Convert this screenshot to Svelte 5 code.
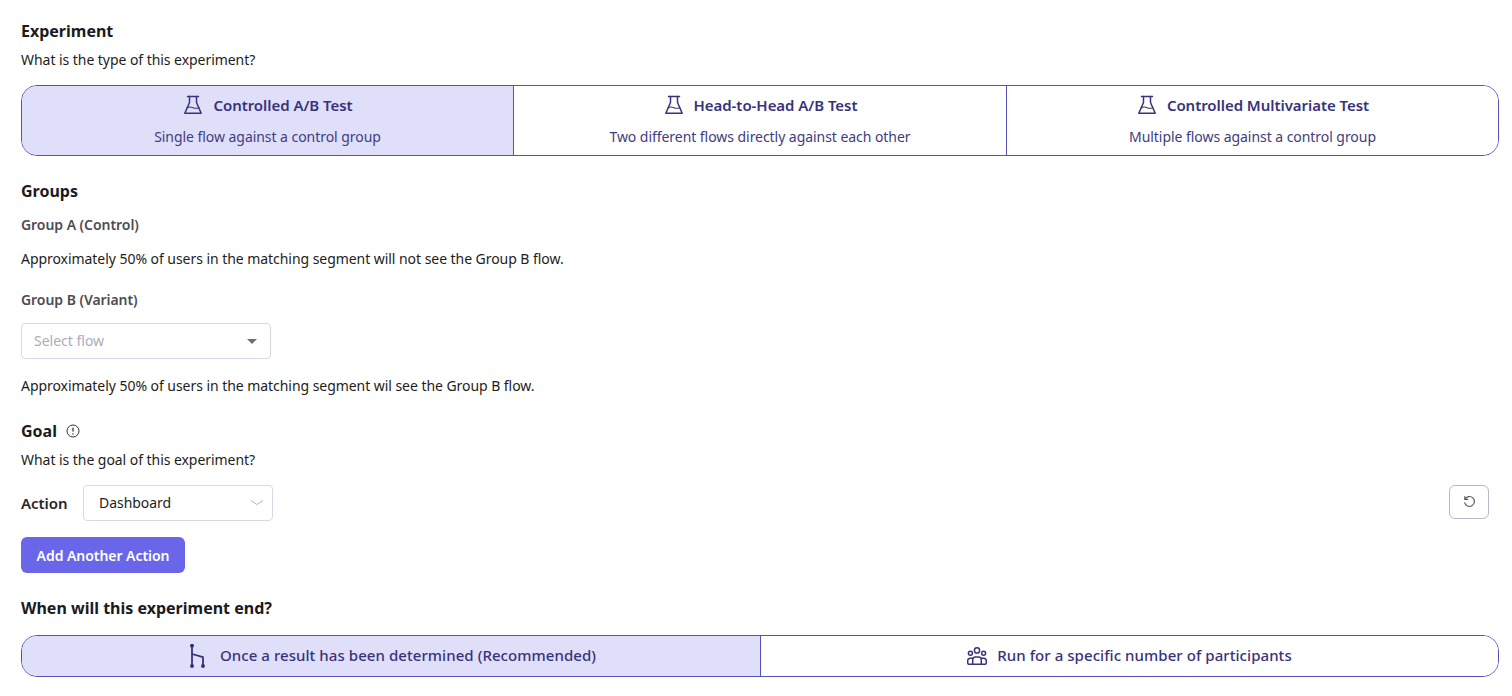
<script lang="ts">
  const types = [
    { title: 'Controlled A/B Test', sub: 'Single flow against a control group', active: true },
    { title: 'Head-to-Head A/B Test', sub: 'Two different flows directly against each other', active: false },
    { title: 'Controlled Multivariate Test', sub: 'Multiple flows against a control group', active: false },
  ];
</script>

{#snippet flask()}
  <svg class="icon" viewBox="0 0 22 20" fill="none" stroke="currentColor" stroke-width="1.5" stroke-linejoin="round" stroke-linecap="round">
    <path d="M5.500 1.500h11" />
    <path d="M7.500 1.500v6L2.800 18.300h16.400L14.500 7.500v-6" />
    <path d="M5 13c2-1.400 4-1.200 6-.3s3.600.9 6 0" stroke-width="1.100" />
  </svg>
{/snippet}

<main class="page">
  <h2 class="heading first">Experiment</h2>
  <p class="desc">What is the type of this experiment?</p>
  <div class="segment types">
    {#each types as t}
      <button class="seg tall" class:active={t.active}>
        <span class="seg-title">{@render flask()}{t.title}</span>
        <span class="seg-sub">{t.sub}</span>
      </button>
    {/each}
  </div>

  <h2 class="heading groups">Groups</h2>
  <div class="label group-a">Group A (Control)</div>
  <p class="body a-note">Approximately 50% of users in the matching segment will not see the Group B flow.</p>
  <div class="label group-b">Group B (Variant)</div>
  <div class="select flow">
    <span class="placeholder">Select flow</span>
    <span class="caret"></span>
  </div>
  <p class="body b-note">Approximately 50% of users in the matching segment wil see the Group B flow.</p>

  <div class="goal-head">
    <h2 class="heading">Goal</h2>
    <svg class="info" viewBox="0 0 14 14" fill="none" stroke="#333" stroke-width="1">
      <circle cx="7" cy="7" r="6" />
      <path d="M7 3.800v3.800" stroke-width="1.300" />
      <path d="M7 9.300v1.100" stroke-width="1.300" />
    </svg>
  </div>
  <p class="desc">What is the goal of this experiment?</p>

  <div class="action-row">
    <span class="action-label">Action</span>
    <div class="select dash">
      <span>Dashboard</span>
      <svg class="chev" viewBox="0 0 14 8" fill="none" stroke="#b4b4bc" stroke-width="1"><path d="M1 1.500l6 4 6-4" /></svg>
    </div>
    <button class="reset" aria-label="Reset">
      <svg viewBox="0 0 16 16" fill="none" stroke="#555" stroke-width="1.200" stroke-linecap="round" stroke-linejoin="round">
        <path d="M3.200 5.600A5.300 5.300 0 1 1 2.800 9.300" />
        <path d="M3 2.600v3.100h3.100" />
      </svg>
    </button>
  </div>
  <button class="primary">Add Another Action</button>

  <h2 class="heading ends">When will this experiment end?</h2>
  <div class="segment ending">
    <button class="seg short active">
      <span class="seg-title end-title">
        <svg class="icon branch" viewBox="0 0 24 24" fill="none" stroke="currentColor" stroke-width="1.800" stroke-linecap="round" stroke-linejoin="round">
          <path d="M6 1.700v20.300" />
          <path d="M6 10l11 3.200V22" />
          <circle cx="6" cy="1.700" r="1.100" fill="currentColor" />
          <circle cx="6" cy="22" r="1.100" fill="currentColor" />
          <circle cx="17" cy="22" r="1.100" fill="currentColor" />
        </svg>
        Once a result has been determined (Recommended)
      </span>
    </button>
    <button class="seg short">
      <span class="seg-title end-title">
        <svg class="icon people" viewBox="0 0 20 18" fill="none" stroke="currentColor" stroke-width="1.500" stroke-linejoin="round">
          <circle cx="10" cy="3.400" r="2.600" />
          <circle cx="3.400" cy="6.200" r="2" />
          <circle cx="16.600" cy="6.200" r="2" />
          <path d="M5.700 17.300v-4.500q0-2.800 2.800-2.800h3q2.800 0 2.800 2.800v4.500z" />
          <path d="M5.700 17.300H2.300q-1.600 0-1.600-1.600v-1.900q0-2.600 2.600-2.600h2.600" />
          <path d="M14.300 17.300h3.400q1.600 0 1.600-1.600v-1.900q0-2.600-2.600-2.600h-2.600" />
        </svg>
        Run for a specific number of participants
      </span>
    </button>
  </div>
</main>

<style>
  :global(body) { margin: 0; background: #fff; }
  .page {
    box-sizing: border-box;
    height: 696px;
    overflow: hidden;
    padding: 20px 13px 0 21px;
    font-family: "Noto Sans", "Open Sans", sans-serif;
    font-size: 14px;
    letter-spacing: -0.05px;
    color: #1d1d20;
  }
  .heading { margin: 0; font-size: 16px; line-height: 22px; font-weight: 700; letter-spacing: 0; color: #1b1b1f; }
  .desc { margin: 8px 0 0; line-height: 20px; }
  .body { margin: 0; line-height: 20px; }
  .segment {
    display: grid;
    border: 1px solid #5651b8;
    border-radius: 16px;
    overflow: hidden;
  }
  .types { grid-template-columns: 491px 493px 1fr; height: 71px; box-sizing: border-box; margin-top: 15px; }
  .ending { grid-template-columns: 738px 1fr; height: 42px; box-sizing: border-box; margin-top: 16px; }
  .seg {
    font: inherit;
    letter-spacing: inherit;
    color: #38347a;
    background: #fff;
    border: 0;
    border-left: 1px solid #5651b8;
    padding: 0;
    display: flex;
    flex-direction: column;
    align-items: center;
    justify-content: center;
  }
  .seg:first-child { border-left: 0; }
  .seg.active { background: #e0dffa; }
  .seg-title { display: flex; align-items: center; font-size: 15px; font-weight: 600; line-height: 20px; color: #37337a; }
  .end-title { font-weight: 500; letter-spacing: 0.06px; margin-top: -2px; }
  .seg-sub { margin-top: 11px; position: relative; top: 1px; line-height: 20px; color: #403c80; }
  .icon { width: 22px; height: 20px; margin-right: 9px; display: block; flex: none; }
  .branch { width: 24px; height: 24px; margin-right: 10px; margin-top: 2px; }
  .people { width: 20px; height: 18px; margin-right: 10px; margin-top: 2px; }
  .groups { margin-top: 24px; }
  .label { font-weight: 600; line-height: 20px; color: #4c4c52; }
  .group-a { margin-top: 13px; }
  .a-note { margin-top: 14px; }
  .group-b { margin-top: 21px; }
  .select {
    box-sizing: border-box;
    height: 36px;
    border: 1px solid #d9d9e6;
    border-radius: 4px;
    background: #fff;
    display: flex;
    align-items: center;
    justify-content: space-between;
  }
  .select span:first-child { margin-top: -1px; }
  .flow { width: 250px; margin-top: 13px; padding: 0 13px 0 12px; }
  .placeholder { color: #a9adb8; letter-spacing: 0; }
  .caret { width: 0; height: 0; border-left: 5px solid transparent; border-right: 5px solid transparent; border-top: 5px solid #6f7076; }
  .b-note { margin-top: 17px; }
  .goal-head { display: flex; align-items: center; gap: 9px; margin-top: 24px; }
  .info { width: 14px; height: 14px; display: block; }
  .action-row { display: flex; align-items: center; margin-top: 15px; height: 36px; }
  .action-label { font-size: 15px; font-weight: 600; width: 62px; color: #26262a; }
  .dash { width: 190px; padding: 0 8px 0 15px; }
  .chev { width: 14px; height: 8px; display: block; }
  .reset {
    margin-left: auto;
    margin-right: 10px;
    margin-top: -3px;
    width: 40px;
    height: 34px;
    box-sizing: border-box;
    padding: 0;
    border: 1px solid #b5bac4;
    border-radius: 6px;
    background: #fff;
    display: flex;
    align-items: center;
    justify-content: center;
  }
  .reset svg { width: 15px; height: 15px; display: block; }
  .primary {
    display: block;
    box-sizing: border-box;
    margin-top: 16px;
    width: 164px;
    height: 36px;
    padding: 0;
    border: 0;
    border-radius: 6px;
    background: #6a66e9;
    color: #fff;
    font: inherit;
    letter-spacing: inherit;
    font-weight: 600;
  }
  .ends { margin-top: 24px; }
</style>
